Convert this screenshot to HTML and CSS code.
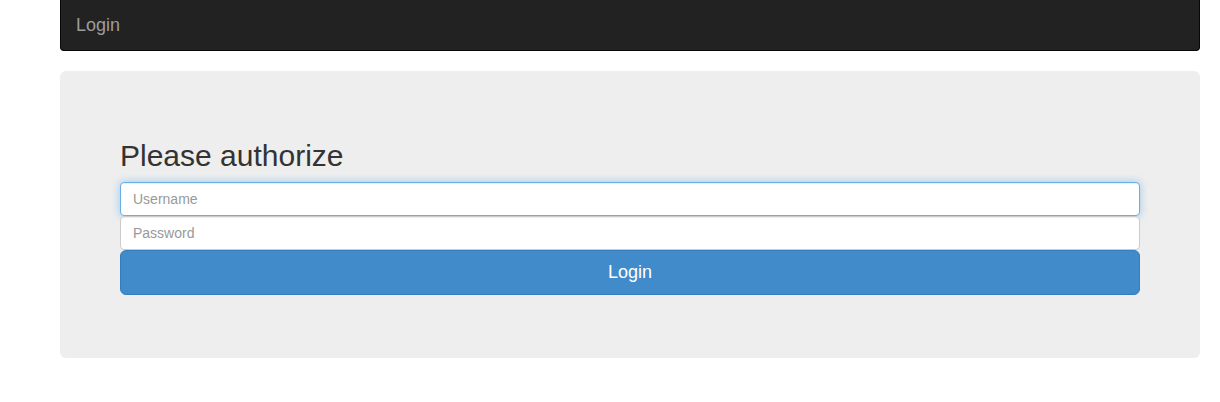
FILE: index.html
```html
<!DOCTYPE html>
<html>
<head>
<meta charset="utf-8">
<title>Login</title>
<link rel="stylesheet" href="styles.css">
</head>
<body>
<div class="page">
  <nav class="navbar">
    <span class="brand">Login</span>
  </nav>
  <div class="jumbotron">
    <form class="signin">
      <h2 class="title">Please authorize</h2>
      <input class="field field-focus" type="text" placeholder="Username" autofocus>
      <input class="field" type="password" placeholder="Password">
      <button class="btn" type="button">Login</button>
    </form>
  </div>
</div>
</body>
</html>
```
FILE: styles.css
```css
* { box-sizing: border-box; }
html, body { margin: 0; padding: 0; background: #fff; }
body {
  font-family: "Liberation Sans", Arial, Helvetica, sans-serif;
  font-size: 14px;
  line-height: 1.428571429;
  color: #333;
}
.page {
  margin: 0 20px 0 60px;
}
.navbar {
  height: 51px;
  background: #222;
  border: 1px solid #080808;
  border-top: 0;
  border-radius: 0 0 4px 4px;
  padding: 15px 15px;
  margin-bottom: 20px;
}
.brand {
  display: block;
  color: #9d9d9d;
  font-size: 18px;
  line-height: 20px;
}
.jumbotron {
  background: #eee;
  border-radius: 6px;
  padding: 48px 60px 63px;
}
.signin {
  display: flex;
  flex-direction: column;
}
.title {
  margin: 20px 0 10px;
  font-size: 30px;
  font-weight: 500;
  line-height: 1.1;
  color: #333;
}
.field {
  display: block;
  width: 100%;
  height: 34px;
  padding: 6px 12px;
  font-family: inherit;
  font-size: 14px;
  line-height: 1.428571429;
  color: #555;
  background: #fff;
  border: 1px solid #ccc;
  border-radius: 4px;
  box-shadow: inset 0 1px 1px rgba(0,0,0,0.075);
  outline: none;
}
.field::placeholder { color: #999; }
.field-focus {
  border-color: #66afe9;
  box-shadow: inset 0 1px 1px rgba(0,0,0,0.075), 0 0 8px rgba(102,175,233,0.6);
}
.btn {
  display: block;
  width: 100%;
  height: 45px;
  padding: 10px 16px;
  font-family: inherit;
  font-size: 18px;
  line-height: 1.33;
  color: #fff;
  background: #428bca;
  border: 1px solid #357ebd;
  border-radius: 6px;
  cursor: pointer;
}
```
